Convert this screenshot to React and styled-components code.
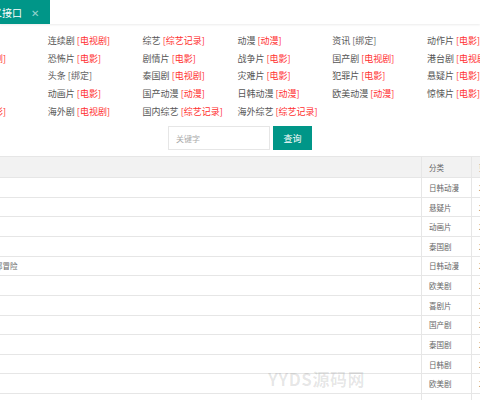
import React from 'react';
import styled, { createGlobalStyle } from 'styled-components';

const GlobalStyle = createGlobalStyle`
  html, body {
    margin: 0;
    padding: 0;
    background: #fff;
    overflow: hidden;
  }
  body {
    font-family: "Noto Sans CJK SC", "Noto Sans", sans-serif;
    color: #555;
  }
  * { box-sizing: border-box; }
`;

const categories = [
  ['电影', '电影'], ['连续剧', '电视剧'], ['综艺', '综艺记录'], ['动漫', '动漫'], ['资讯', '绑定'], ['动作片', '电影'],
  ['韩剧', '电视剧'], ['恐怖片', '电影'], ['剧情片', '电影'], ['战争片', '电影'], ['国产剧', '电视剧'], ['港台剧', '电视剧'],
  ['喜剧', '电影'], ['头条', '绑定'], ['泰国剧', '电视剧'], ['灾难片', '电影'], ['犯罪片', '电影'], ['悬疑片', '电影'],
  ['爱情', '电影'], ['动画片', '电影'], ['国产动漫', '动漫'], ['日韩动漫', '动漫'], ['欧美动漫', '动漫'], ['惊悚片', '电影'],
  ['科幻片', '电影'], ['海外剧', '电视剧'], ['国内综艺', '综艺记录'], ['海外综艺', '综艺记录'],
];

const rows = [
  ['名侦探柯南', '日韩动漫'],
  ['无声的证人', '悬疑片'],
  ['小猪佩奇', '动画片'],
  ['天生一对', '泰国剧'],
  ['汪汪队立大功电影第二部冒险', '日韩动漫'],
  ['老友记', '欧美剧'],
  ['唐人街探案', '喜剧片'],
  ['人世间', '国产剧'],
  ['不期而遇', '泰国剧'],
  ['深夜食堂', '日韩剧'],
  ['越狱', '欧美剧'],
  ['战狼', '动作片'],
];

const Page = styled.div`
  position: relative;
  width: 480px;
  height: 400px;
  overflow: hidden;
`;

const TabBar = styled.div`
  display: flex;
  height: 24px;
  box-shadow: 0 1px 2px rgba(0, 0, 0, 0.08);
`;

const Tab = styled.div`
  display: flex;
  align-items: center;
  margin-left: -38px;
  padding: 0 11px 0 10px;
  background: #009688;
  color: #fff;
  font-size: 10px;
`;

const TabClose = styled.span`
  margin-left: 9px;
  color: rgba(255, 255, 255, 0.6);
  font-size: 10px;
`;

const CategoryGrid = styled.div`
  display: grid;
  grid-template-columns: repeat(6, 94.8px);
  grid-auto-rows: 17.7px;
  margin: 8px 0 0 -47px;
  font-size: 9px;
  line-height: 17.7px;
`;

const CategoryItem = styled.div`
  white-space: nowrap;
  color: #555;
`;

const Tag = styled.span`
  color: ${p => (p.$muted ? '#666' : '#ff3030')};
`;

const SearchRow = styled.div`
  display: flex;
  justify-content: center;
  gap: 3px;
  margin-top: 6px;
`;

const SearchInput = styled.input`
  width: 102px;
  height: 24px;
  padding: 0 7px;
  border: 1px solid #e6e6e6;
  outline: none;
  font-family: inherit;
  font-size: 8px;
  color: #555;
  &::placeholder { color: #aaa; }
`;

const SearchButton = styled.button`
  width: 39px;
  height: 24px;
  border: none;
  background: #009688;
  color: #fff;
  font-family: inherit;
  font-size: 9px;
`;

const Table = styled.div`
  width: 709px;
  margin: 6px 0 0 -87px;
  border-top: 1px solid #e6e6e6;
  font-size: 7.5px;
  color: #666;
`;

const Row = styled.div`
  display: grid;
  grid-template-columns: 509px 50px 150px;
  height: ${p => (p.$head ? '20.7px' : '19.64px')};
  background: ${p => (p.$head ? '#f2f2f2' : '#fff')};
  border-bottom: 1px solid #e6e6e6;
`;

const Cell = styled.div`
  display: flex;
  align-items: center;
  padding: 0 7px;
  white-space: nowrap;
  overflow: hidden;
  border-right: 1px solid #e6e6e6;
  &:last-child { border-right: none; }
`;

const Watermark = styled.div`
  position: absolute;
  left: 268px;
  top: 370px;
  font-size: 17px;
  font-weight: bold;
  line-height: 1;
  letter-spacing: 0.5px;
  color: rgba(0, 0, 0, 0.1);
  pointer-events: none;
`;

export default function App() {
  return (
    <>
      <GlobalStyle />
      <Page>
        <TabBar>
          <Tab>
            自定义接口<TabClose>✕</TabClose>
          </Tab>
        </TabBar>

        <CategoryGrid>
          {categories.map(([name, tag]) => (
            <CategoryItem key={name}>
              {name} <Tag $muted={tag === '绑定'}>[{tag}]</Tag>
            </CategoryItem>
          ))}
        </CategoryGrid>

        <SearchRow>
          <SearchInput placeholder="关键字" />
          <SearchButton>查询</SearchButton>
        </SearchRow>

        <Table>
          <Row $head>
            <Cell>名称</Cell>
            <Cell>分类</Cell>
            <Cell>更新时间</Cell>
          </Row>
          {rows.map(([title, type]) => (
            <Row key={title}>
              <Cell>{title}</Cell>
              <Cell>{type}</Cell>
              <Cell>2023-05-12 10:24</Cell>
            </Row>
          ))}
        </Table>

        <Watermark>YYDS源码网</Watermark>
      </Page>
    </>
  );
}
